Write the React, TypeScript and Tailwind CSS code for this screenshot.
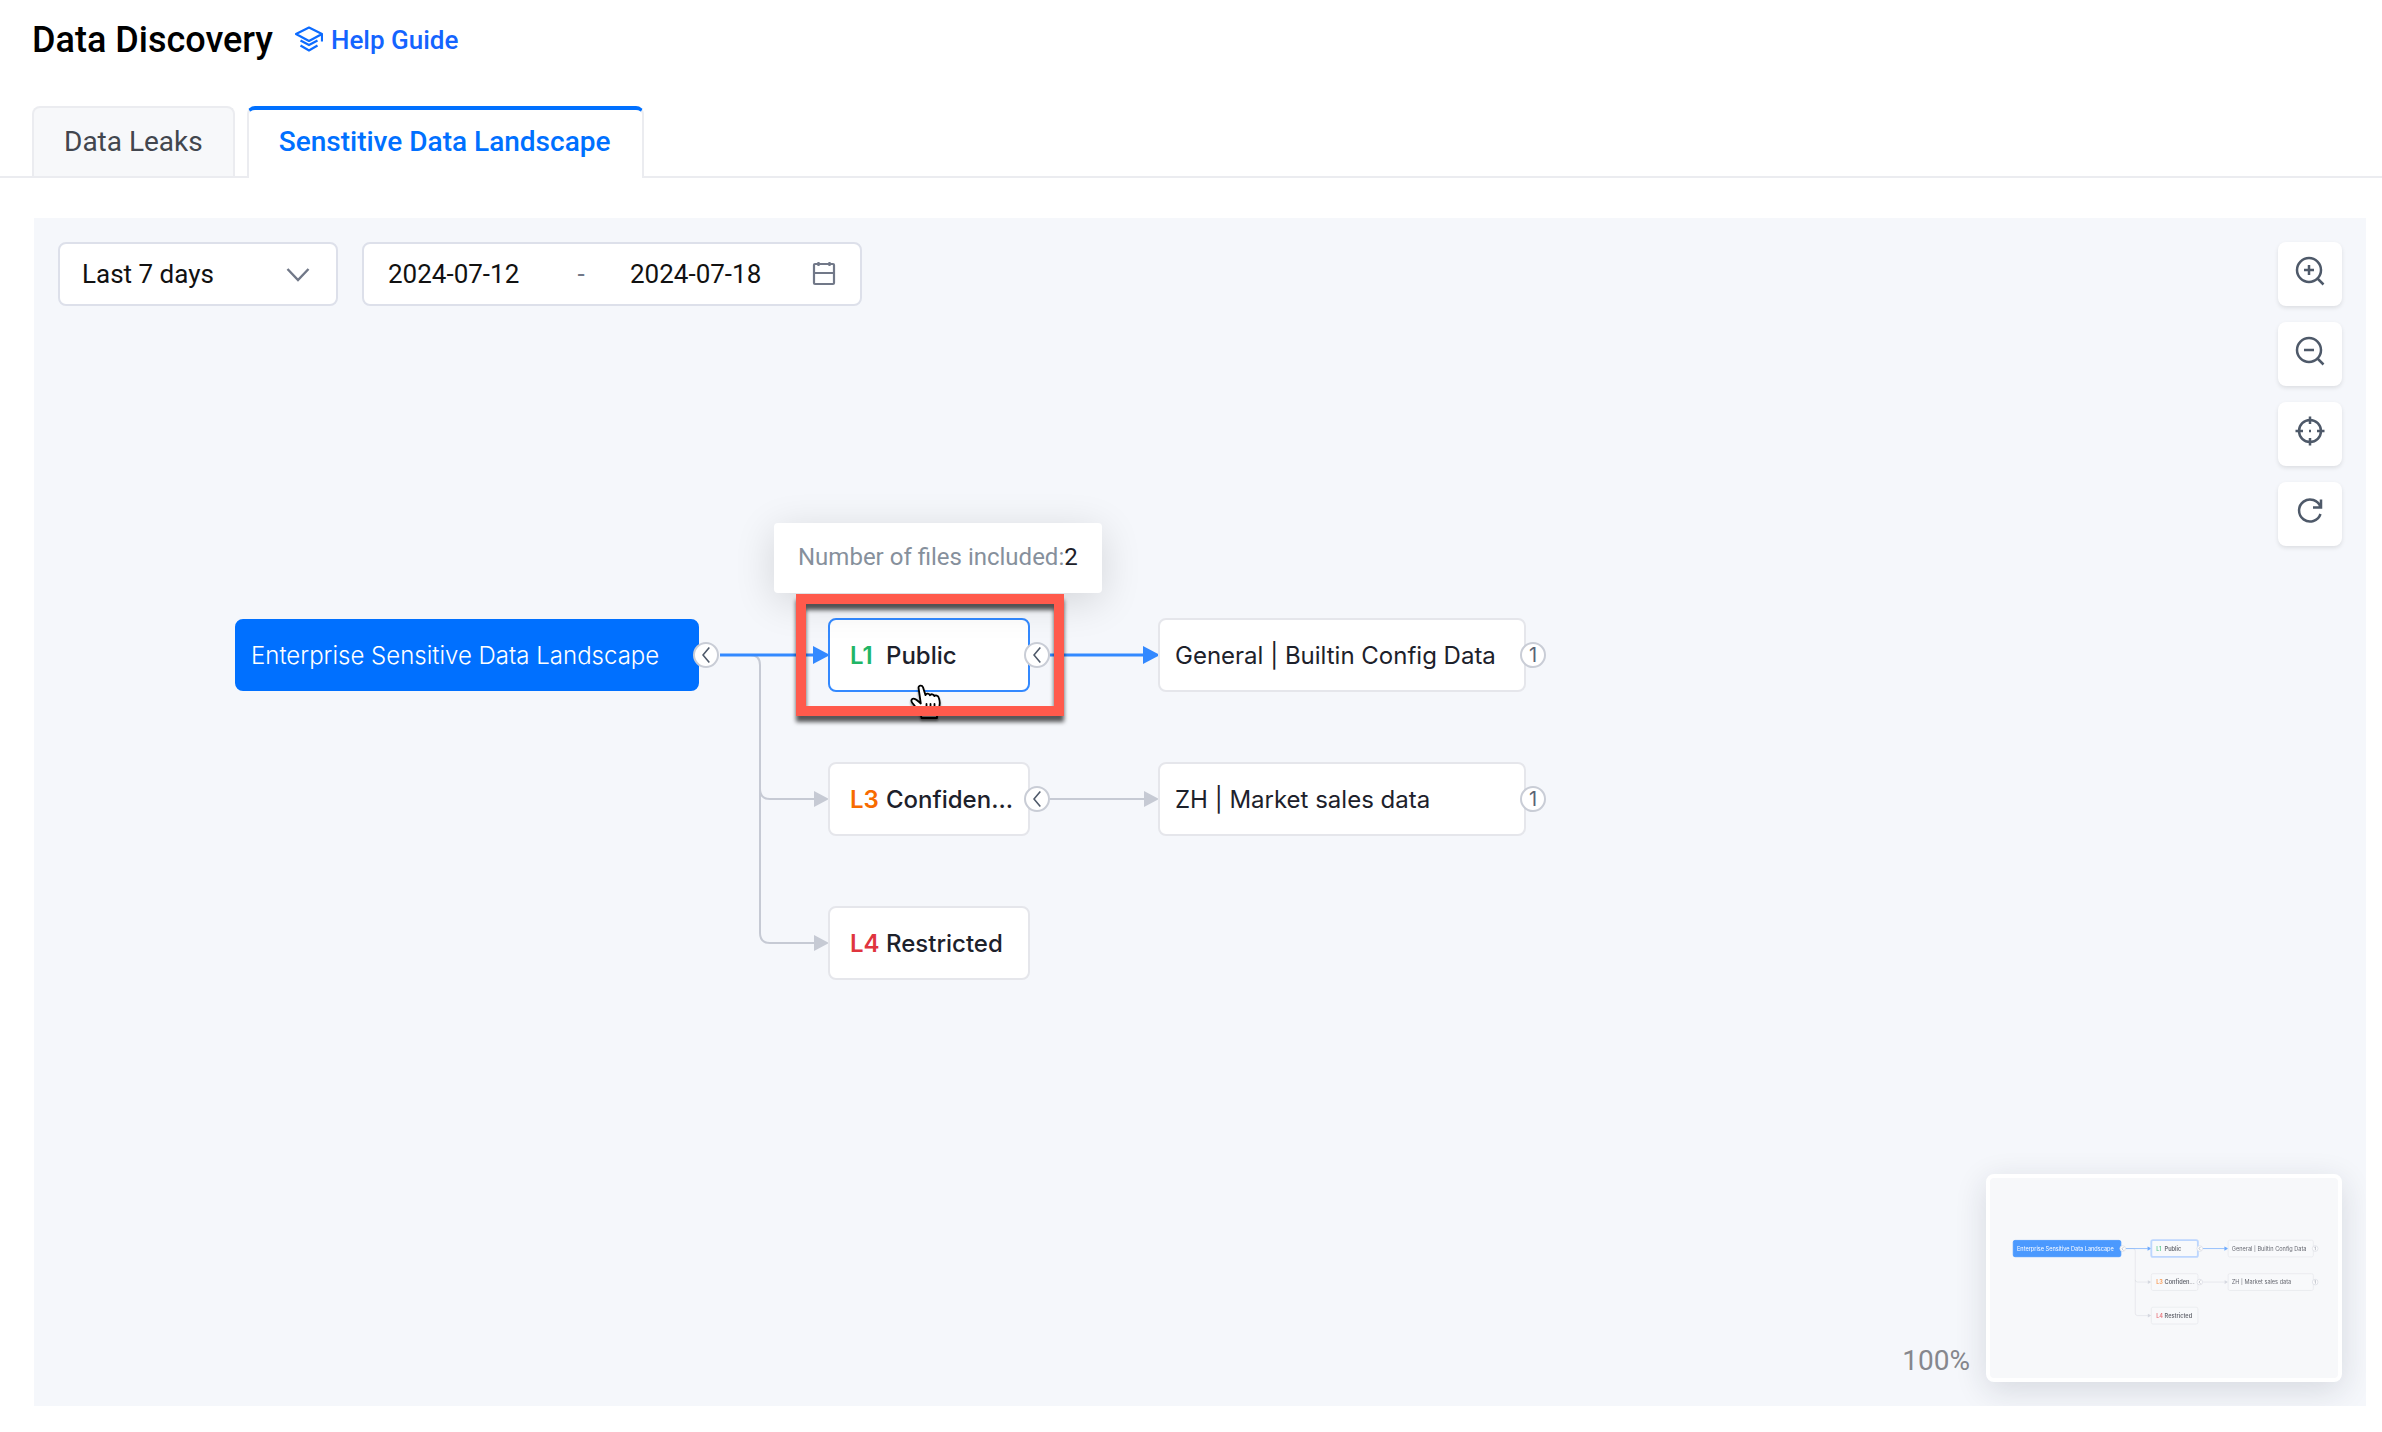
import { useState } from "react";

type Level = { code: string; color: string; fill: string };

interface GraphNode {
  id: string;
  label: string;
  left: number;
  top: number;
  width: number;
  height: number;
  root?: boolean;
  active?: boolean;
  level?: Level;
  badge?: string;
}

// coordinates are relative to the canvas
const nodes: GraphNode[] = [
  {
    id: "root",
    label: "Enterprise Sensitive Data Landscape",
    left: 201,
    top: 401,
    width: 464,
    height: 72,
    root: true,
    badge: "<",
  },
  {
    id: "l1",
    label: "Public",
    left: 794,
    top: 400,
    width: 202,
    height: 74,
    active: true,
    badge: "<",
    level: { code: "L1", color: "text-[#21b566]", fill: "#21b566" },
  },
  {
    id: "l3",
    label: "Confiden...",
    left: 794,
    top: 544,
    width: 202,
    height: 74,
    badge: "<",
    level: { code: "L3", color: "text-[#f76b00]", fill: "#f76b00" },
  },
  {
    id: "l4",
    label: "Restricted",
    left: 794,
    top: 688,
    width: 202,
    height: 74,
    level: { code: "L4", color: "text-[#e0353f]", fill: "#e0353f" },
  },
  { id: "general", label: "General | Builtin Config Data", left: 1124, top: 400, width: 368, height: 74, badge: "1" },
  { id: "zh", label: "ZH | Market sales data", left: 1124, top: 544, width: 368, height: 74, badge: "1" },
];

function Edges() {
  return (
    <g fill="none" strokeWidth="2">
      <g stroke="#c6cad4">
        <path d="M686 437H716Q726 437 726 447V571Q726 581 736 581H780" />
        <path d="M726 571V715Q726 725 736 725H780" />
        <path d="M1016 581H1110" />
      </g>
      <g fill="#c6cad4">
        <path d="M780 573L795 581L780 589Z" />
        <path d="M780 717L795 725L780 733Z" />
        <path d="M1110 573L1125 581L1110 589Z" />
      </g>
      <g stroke="#3389ff" strokeWidth="3">
        <path d="M686 437H780" />
        <path d="M1016 437H1110" />
      </g>
      <g fill="#3389ff">
        <path d="M779 428L796 437L779 446Z" />
        <path d="M1109 428L1126 437L1109 446Z" />
      </g>
    </g>
  );
}

function NodeBadge({ kind }: { kind: string }) {
  return (
    <button
      aria-label={kind === "<" ? "Collapse" : "Expand"}
      className="absolute top-1/2 -right-[22px] flex size-[26px] -translate-y-1/2 items-center justify-center rounded-full border-2 border-[#c9cdd6] bg-white text-xl leading-none text-[#5b6474]"
    >
      {kind === "<" ? (
        <svg className="h-4 w-2" viewBox="0 0 8 16" fill="none" stroke="#4e5969" strokeWidth="1.6">
          <path d="M7.3 .6L1 8l6.3 7.4" />
        </svg>
      ) : (
        kind
      )}
    </button>
  );
}

function NodeCard({ node }: { node: GraphNode }) {
  let look = "border-[#e5e6eb] bg-white pl-[15px] text-[#1d212b]";
  if (node.root) look = "border-[#0070ff] bg-[#0070ff] pl-[14px] font-light text-white";
  else if (node.active) look = "border-[#3389ff] bg-white pl-5 font-medium text-[#1d212b]";
  else if (node.level) look = "border-[#e5e6eb] bg-white pl-5 font-medium text-[#1d212b]";

  return (
    <div
      className={`absolute flex items-center gap-2 rounded-lg border-2 pt-0.5 font-[Inter,sans-serif] text-2xl whitespace-nowrap ${look}`}
      style={{ left: node.left, top: node.top, width: node.width, height: node.height }}
    >
      {node.level && <span className={`w-7 font-semibold ${node.level.color}`}>{node.level.code}</span>}
      <span>{node.label}</span>
      {node.badge && <NodeBadge kind={node.badge} />}
    </div>
  );
}

function Minimap() {
  return (
    <div className="h-52 w-[356px] overflow-hidden rounded-lg border-4 border-white bg-[#f7f8fa] shadow-[0_8px_32px_rgba(30,35,60,0.14)]">
      <svg className="h-full w-full" viewBox="102 134 1495 859" fontFamily="Inter, sans-serif" fontSize="24">
        <g opacity="0.7">
          <Edges />
          {nodes.map((n) => (
            <g key={n.id}>
              <rect
                x={n.left + 1}
                y={n.top + 1}
                width={n.width - 2}
                height={n.height - 2}
                rx="7"
                strokeWidth={n.active ? 8 : 4}
                fill={n.root ? "#0070ff" : "#f8f9fb"}
                stroke={n.root ? "#0070ff" : n.active ? "#a4c8ff" : "#e5e6eb"}
              />
              {n.level && (
                <text x={n.left + 22} y={n.top + 46} fill={n.level.fill} fontWeight="600">
                  {n.level.code}
                </text>
              )}
              <text
                x={n.left + (n.level ? 58 : 17)}
                y={n.top + 46}
                fill={n.root ? "#fff" : "#1d212b"}
                fontWeight={n.level ? 600 : 400}
              >
                {n.label}
              </text>
              {n.badge && (
                <circle cx={n.left + n.width + 7} cy="0" r="12" fill="#fff" stroke="#c9cdd6" strokeWidth="3" transform={`translate(0 ${n.top + n.height / 2})`} />
              )}
              {n.badge === "<" && (
                <path d={`M${n.left + n.width + 10} ${n.top + 30}l-6 7l6 7`} fill="none" stroke="#4e5969" strokeWidth="2" />
              )}
              {n.badge === "1" && (
                <path d={`M${n.left + n.width + 4} ${n.top + 32}l4 -2v14`} fill="none" stroke="#4e5969" strokeWidth="2" />
              )}
            </g>
          ))}
        </g>
      </svg>
    </div>
  );
}

function HandCursor() {
  return (
    <svg
      className="absolute top-[466px] left-[876px] h-9 w-8 drop-shadow-[0_2px_1px_rgba(0,0,0,0.4)]"
      viewBox="0 0 32 36"
      fill="#fff"
      stroke="#000"
      strokeWidth="1.8"
      strokeLinejoin="round"
      strokeLinecap="round"
    >
      <path d="M8.6 4.2C8 1.4 12 .6 13 3.3L15.5 11.2C16.2 9 19.4 9.2 19.9 11.4C20.9 9.6 23.9 10 24.3 12.2C25.5 10.8 28.2 11.5 28.8 13.7C30.2 17.8 30 21.5 28.5 24.5C27.6 26.4 27 28 27 30L27 34H11.5C11.5 31 9.5 28.5 7.5 26C5.5 23.5 4.5 21 2.7 19.3C.3 16.9 1.5 14 4.5 14.9C6.500 15.5 8.5 17.3 10.800 19.5Z" />
      <path d="M16.5 20v6.5M20.5 20v6.5M24.5 20v6.5" fill="none" />
    </svg>
  );
}

const toolIcons = [
  {
    label: "Zoom in",
    icon: (
      <>
        <circle cx="15" cy="15" r="12" />
        <path d="M15 10v10M10 15h10M23.5 23.5l6 6" />
      </>
    ),
  },
  {
    label: "Zoom out",
    icon: (
      <>
        <circle cx="15" cy="15" r="12" />
        <path d="M10 15h10M23.5 23.5l6 6" />
      </>
    ),
  },
  {
    label: "Center",
    icon: (
      <>
        <circle cx="16" cy="16" r="11" />
        <path d="M16 1.5v7.5M16 23v7.5M1.5 16h7.5M23 16h7.5M15 16h2" />
      </>
    ),
  },
  {
    label: "Reset",
    icon: <path d="M27 4.5v8H19M26.5 12A11 11 0 1 0 26.5 19" />,
  },
];

export default function App() {
  const [range, setRange] = useState("7");
  const [from, setFrom] = useState("2024-07-12");
  const [to, setTo] = useState("2024-07-18");

  return (
    <div className="flex min-h-screen flex-col bg-white font-[Roboto,sans-serif] text-black">
      <header className="flex h-[106px] items-start gap-[22px] pt-4 pl-8">
        <h1 className="text-4xl leading-[48px] font-medium">Data Discovery</h1>
        <a href="#help" className="flex items-center gap-2 text-[26px] leading-[48px] font-medium text-[#1464ff]">
          <svg className="h-7 w-7" viewBox="0 0 28 28" fill="none" stroke="#0c6bff" strokeWidth="2.2">
            <path d="M14 1.5L27 8L14 15L1 8Z" strokeLinejoin="round" />
            <path d="M27 8V15.5" />
            <path d="M5.5 14.5L14 19L22.5 14.5M5.5 19.500L14 24.5L22.5 19.5" />
          </svg>
          Help Guide
        </a>
      </header>

      {/* tabs */}
      <nav className="flex h-[72px] gap-3 border-b-2 border-[#ebecf0] pl-8 text-[28px]">
        <button className="rounded-t-lg border-2 border-b-0 border-[#ebecf0] bg-[#f7f8fa] px-[30px] text-[#42464e]">
          Data Leaks
        </button>
        <button className="-mb-0.5 rounded-t-lg border-x-2 border-t-4 border-x-[#ebecf0] border-t-[#0070ff] bg-white pr-8 pb-1 pl-[30px] font-medium text-[#0070ff]">
          Senstitive Data Landscape
        </button>
      </nav>

      <main className="relative mt-10 mr-4 mb-[26px] ml-[34px] flex flex-1 flex-col justify-between overflow-hidden bg-[#f5f7fb] p-6">
        {/* graph */}
        <div className="absolute inset-0">
          <svg className="absolute inset-0 h-full w-full">
            <Edges />
          </svg>
          {nodes.map((n) => (
            <NodeCard key={n.id} node={n} />
          ))}
          <div
            role="tooltip"
            className="absolute top-[305px] left-[740px] flex h-[70px] items-center rounded-sm bg-white px-6 pb-0.5 text-2xl whitespace-nowrap text-[#86909c] shadow-[0_8px_40px_rgba(0,0,0,0.14)]"
          >
            Number of files included:<span className="text-[#1d2129]">2</span>
          </div>
          <HandCursor />
          <div className="absolute top-[376px] left-[762px] h-[122px] w-[268px] border-10 border-[#ff5a4c] drop-shadow-[0_6px_2px_rgba(0,0,0,0.65)]" />
        </div>

        <div className="flex items-start justify-between">
          <div className="relative flex gap-6 text-[26px] text-[#111]">
            <div className="relative">
              <select
                aria-label="Time range"
                value={range}
                onChange={(e) => setRange(e.target.value)}
                className="h-16 w-[280px] appearance-none rounded-lg border-2 border-[#dde0ea] bg-white px-[22px]"
              >
                <option value="7">Last 7 days</option>
                <option value="30">Last 30 days</option>
              </select>
              <svg
                className="pointer-events-none absolute top-[26px] right-7 h-3.5 w-6"
                viewBox="0 0 24 14"
                fill="none"
                stroke="#717888"
                strokeWidth="2.4"
              >
                <path d="M1.5 1L12 12L22.5 1" />
              </svg>
            </div>
            <div className="flex h-16 w-[500px] items-center rounded-lg border-2 border-[#dde0ea] bg-white px-6">
              <input
                aria-label="Start date"
                value={from}
                onChange={(e) => setFrom(e.target.value)}
                className="w-36 outline-none"
              />
              <span className="flex-1 text-center text-[#717888]">-</span>
              <input
                aria-label="End date"
                value={to}
                onChange={(e) => setTo(e.target.value)}
                className="w-[182px] outline-none"
              />
              <svg className="h-6 w-6" viewBox="0 0 24 24" fill="none" stroke="#717888" strokeWidth="2.2">
                <rect x="2" y="2" width="20" height="20" rx="1" />
                <path d="M2 11h20M6.5 0v4M17.5 0v4" />
              </svg>
            </div>
          </div>

          <div className="relative flex flex-col gap-4">
            {toolIcons.map((t) => (
              <button
                key={t.label}
                aria-label={t.label}
                className="flex size-16 items-center justify-center rounded-lg bg-white pb-1.5 shadow-[0_2px_4px_rgba(0,0,0,0.1)]"
              >
                <svg className="size-8" viewBox="0 0 32 32" fill="none" stroke="#4e5969" strokeWidth="2.5">
                  {t.icon}
                </svg>
              </button>
            ))}
          </div>
        </div>

        <div className="relative flex items-end justify-end gap-4">
          <span className="text-[28px] text-[#86878d]">100%</span>
          <Minimap />
        </div>
      </main>
    </div>
  );
}
